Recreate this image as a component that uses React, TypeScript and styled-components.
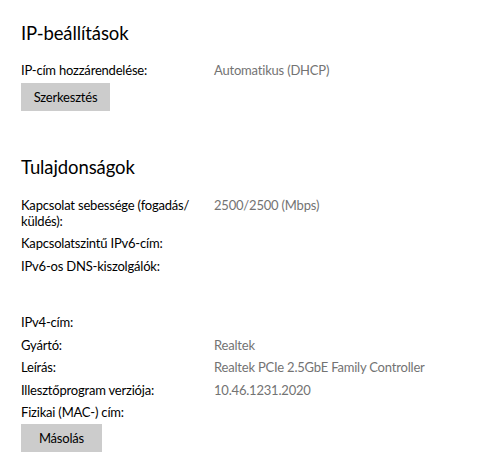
import styled, { createGlobalStyle } from "styled-components";
import { FC } from "react";

const GlobalStyle = createGlobalStyle`
  body {
    margin: 0;
    background: #fff;
    font-family: Lato, "Noto Sans", Arial, sans-serif;
    color: #000;
  }
`;

type Row = { label: string; value?: string };

const speedRows: Row[] = [
  { label: "Kapcsolat sebessége (fogadás/ küldés):", value: "2500/2500 (Mbps)" },
  { label: "Kapcsolatszintű IPv6-cím:" },
  { label: "IPv6-os DNS-kiszolgálók:" },
];

const deviceRows: Row[] = [
  { label: "IPv4-cím:" },
  { label: "Gyártó:", value: "Realtek" },
  { label: "Leírás:", value: "Realtek PCIe 2.5GbE Family Controller" },
  { label: "Illesztőprogram verziója:", value: "10.46.1231.2020" },
  { label: "Fizikai (MAC-) cím:" },
];

const PropertyList: FC<{ rows: Row[]; gapAfter: number }> = ({ rows, gapAfter }) => (
  <List $gapAfter={gapAfter}>
    {rows.map((r) => (
      <PropertyRow key={r.label}>
        <Label>{r.label}</Label>
        <Value>{r.value}</Value>
      </PropertyRow>
    ))}
  </List>
);

const App: FC = () => {
  return (
    <Page>
      <GlobalStyle />
      <Section>
        <Title>IP-beállítások</Title>
        <PropertyList
          rows={[{ label: "IP-cím hozzárendelése:", value: "Automatikus (DHCP)" }]}
          gapAfter={5}
        />
        <Button $width={89}>Szerkesztés</Button>
      </Section>
      <Section>
        <Title>Tulajdonságok</Title>
        <PropertyList rows={speedRows} gapAfter={40.5} />
        <PropertyList rows={deviceRows} gapAfter={3.5} />
        <Button $width={81}>Másolás</Button>
      </Section>
    </Page>
  );
};

const Page = styled.div`
  display: flex;
  flex-direction: column;
  gap: 42px;
  padding: 18.5px 21px 0;
  width: 480px;
  height: 476px;
  box-sizing: border-box;
`;

const Section = styled.section`
  display: flex;
  flex-direction: column;
  align-items: flex-start;
`;

const Title = styled.h2`
  margin: 0 0 15.5px;
  font-size: 18.5px;
  font-weight: 400;
  line-height: 28px;
  letter-spacing: -0.1px;
  color: #000;
`;

const List = styled.div<{ $gapAfter: number }>`
  display: flex;
  flex-direction: column;
  gap: 6.5px;
  width: 100%;
  margin-bottom: ${(p) => p.$gapAfter}px;
`;

const PropertyRow = styled.div`
  display: grid;
  grid-template-columns: 193px 1fr;
  font-size: 13px;
  line-height: 16px;
  letter-spacing: -0.2px;
`;

const Label = styled.span`
  color: #000;
  padding-right: 10px;
`;

const Value = styled.span`
  color: #737373;
`;

const Button = styled.button<{ $width: number }>`
  width: ${(p) => p.$width}px;
  height: 28px;
  padding: 0;
  border: none;
  background: #cccccc;
  color: #000;
  font-family: inherit;
  font-size: 13px;
  letter-spacing: -0.2px;
  cursor: pointer;
`;

export default App;
